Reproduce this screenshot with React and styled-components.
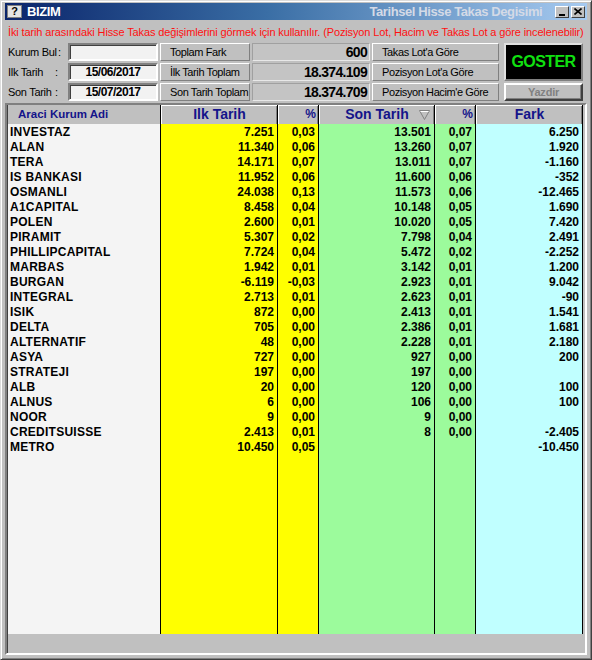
import React from 'react';
import styled, { createGlobalStyle } from 'styled-components';

const GlobalStyle = createGlobalStyle`
  html, body {
    margin: 0;
    padding: 0;
    background: #c0c0c0;
  }
  body {
    font-family: "Liberation Sans", Arial, sans-serif;
  }
`;

const face = '#c0c0c0';

const Window = styled.div`
  width: 592px;
  height: 660px;
  box-sizing: border-box;
  background: ${face};
  border: 1px solid;
  border-color: #dcdcdc #404040 #404040 #dcdcdc;
  box-shadow: inset 1px 1px #ffffff, inset -1px -1px #808080;
  padding: 2px 4px 4px 4px;
  display: flex;
  flex-direction: column;
`;

const TitleBar = styled.div`
  height: 17px;
  display: flex;
  align-items: center;
  padding: 0 2px 0 2px;
  background: linear-gradient(90deg, #0a246a 0%, #3a6ea5 45%, #a6caf0 100%);
  color: #ffffff;
  font-weight: bold;
  font-size: 13px;
  letter-spacing: -0.4px;
  overflow: hidden;
`;

const AppIcon = styled.div`
  width: 13px;
  height: 11px;
  margin-right: 5px;
  background: #e4e4e4;
  border: 1px solid #808080;
  color: #000;
  font-size: 11px;
  line-height: 11px;
  text-align: center;
  letter-spacing: 0;
`;

const TitleText = styled.span`
  white-space: nowrap;
`;

const SubTitle = styled.span`
  flex: 1;
  min-width: 0;
  white-space: nowrap;
  overflow: hidden;
  color: #d4dae6;
  padding-left: 309px;
`;

const CaptionButton = styled.div`
  width: 14px;
  height: 12px;
  box-sizing: border-box;
  margin-left: ${(p) => (p.$gap ? '2px' : '0')};
  background: ${face};
  border: 1px solid;
  border-color: #ffffff #404040 #404040 #ffffff;
  display: flex;
  align-items: center;
  justify-content: center;
  flex-shrink: 0;
`;

const Notice = styled.div`
  margin-top: 5px;
  height: 14px;
  line-height: 14px;
  padding-left: 3px;
  color: #ff1010;
  font-size: 11px;
  letter-spacing: -0.13px;
  white-space: nowrap;
  overflow: hidden;
`;

const Controls = styled.div`
  margin-top: 4px;
  display: grid;
  grid-template-columns: 61px 90px 90px 118px 127px 82px;
  grid-template-rows: 18px 18px 18px;
  column-gap: 2px;
  row-gap: 2px;
`;

const Label = styled.div`
  display: flex;
  align-items: center;
  padding-left: 3px;
  font-size: 11px;
  letter-spacing: -0.3px;
  color: #000;
`;

const Caption = styled.span`
  display: inline-block;
  min-width: ${(p) => p.$w || 47}px;
`;

const DateInput = styled.div`
  box-sizing: border-box;
  background: #f2f2f2;
  border: 2px solid;
  border-color: #808080 #ffffff #ffffff #808080;
  box-shadow: inset 1px 1px #404040;
  font-size: 12px;
  font-weight: bold;
  letter-spacing: -0.5px;
  line-height: 14px;
  text-align: center;
  color: #000;
`;

const FaceButton = styled.div`
  box-sizing: border-box;
  background: ${face};
  border: 1px solid;
  border-color: #ffffff #808080 #808080 #ffffff;
  padding-left: 9px;
  font-size: 11px;
  letter-spacing: -0.4px;
  line-height: 16px;
  color: #000;
  white-space: nowrap;
  overflow: hidden;
`;

const ValueBox = styled.div`
  box-sizing: border-box;
  background: #c4c4c4;
  border: 1px solid;
  border-color: #a0a0a0 #e8e8e8 #e8e8e8 #a0a0a0;
  padding-right: 2px;
  text-align: right;
  font-size: 14px;
  font-weight: bold;
  letter-spacing: -0.7px;
  line-height: 16px;
  color: #000;
`;

const GoButton = styled.div`
  grid-column: 6;
  grid-row: 1 / span 2;
  margin-left: 3px;
  box-sizing: border-box;
  background: #000;
  border: 2px solid;
  border-color: #e0e0e0 #808080 #808080 #e0e0e0;
  display: flex;
  align-items: center;
  justify-content: center;
  color: #10e010;
  font-size: 16px;
  font-weight: bold;
  letter-spacing: -0.6px;
`;

const PrintButton = styled.div`
  grid-column: 6;
  grid-row: 3;
  margin-left: 3px;
  box-sizing: border-box;
  background: ${face};
  border: 2px solid;
  border-color: #ffffff #404040 #404040 #ffffff;
  box-shadow: inset -1px -1px #808080;
  text-align: center;
  line-height: 14px;
  color: #808080;
  font-size: 11px;
  font-weight: bold;
  letter-spacing: -0.2px;
`;

const Grid = styled.div`
  margin-top: 2px;
  flex: 1;
  box-sizing: border-box;
  background: ${face};
  border: 2px solid;
  border-color: #808080 #ffffff #ffffff #808080;
  box-shadow: inset 1px 0 #404040;
  padding-left: 1px;
`;

const Columns = styled.div`
  display: flex;
  height: 529px;
`;

const Column = styled.div`
  width: ${(p) => p.$w}px;
  flex-shrink: 0;
  box-sizing: border-box;
  background: ${(p) => p.$bg};
  border-right: 1px solid #000;
  display: flex;
  flex-direction: column;
`;

const HeaderCell = styled.div`
  position: relative;
  height: 19px;
  margin-bottom: 1px;
  box-sizing: border-box;
  background: ${face};
  border-top: 1px solid ${(p) => (p.$flat ? face : '#ffffff')};
  border-left: 1px solid ${(p) => (p.$flat ? face : '#ffffff')};
  box-shadow: ${(p) => (p.$flat ? 'none' : 'inset -1px 0 #808080')};
  color: #14148a;
  font-weight: bold;
  font-size: ${(p) => p.$size || 14}px;
  line-height: 17px;
  text-align: ${(p) => p.$align || 'center'};
  padding: ${(p) => p.$pad || '0'};
  white-space: nowrap;
`;

const SortMark = styled.svg`
  position: absolute;
  right: 4px;
  top: 4px;
`;

const Cell = styled.div`
  height: 15px;
  line-height: 15px;
  font-size: 12px;
  font-weight: bold;
  color: #000;
  white-space: nowrap;
  overflow: hidden;
  text-align: ${(p) => p.$align || 'right'};
  padding: ${(p) => (p.$align === 'left' ? '0 0 0 2px' : '0 3px 0 0')};
  letter-spacing: ${(p) => (p.$align === 'left' ? '0.25px' : '0')};
`;

const rows = [
  ['INVESTAZ', '7.251', '0,03', '13.501', '0,07', '6.250'],
  ['ALAN', '11.340', '0,06', '13.260', '0,07', '1.920'],
  ['TERA', '14.171', '0,07', '13.011', '0,07', '-1.160'],
  ['IS BANKASI', '11.952', '0,06', '11.600', '0,06', '-352'],
  ['OSMANLI', '24.038', '0,13', '11.573', '0,06', '-12.465'],
  ['A1CAPITAL', '8.458', '0,04', '10.148', '0,05', '1.690'],
  ['POLEN', '2.600', '0,01', '10.020', '0,05', '7.420'],
  ['PIRAMIT', '5.307', '0,02', '7.798', '0,04', '2.491'],
  ['PHILLIPCAPITAL', '7.724', '0,04', '5.472', '0,02', '-2.252'],
  ['MARBAS', '1.942', '0,01', '3.142', '0,01', '1.200'],
  ['BURGAN', '-6.119', '-0,03', '2.923', '0,01', '9.042'],
  ['INTEGRAL', '2.713', '0,01', '2.623', '0,01', '-90'],
  ['ISIK', '872', '0,00', '2.413', '0,01', '1.541'],
  ['DELTA', '705', '0,00', '2.386', '0,01', '1.681'],
  ['ALTERNATIF', '48', '0,00', '2.228', '0,01', '2.180'],
  ['ASYA', '727', '0,00', '927', '0,00', '200'],
  ['STRATEJI', '197', '0,00', '197', '0,00', ''],
  ['ALB', '20', '0,00', '120', '0,00', '100'],
  ['ALNUS', '6', '0,00', '106', '0,00', '100'],
  ['NOOR', '9', '0,00', '9', '0,00', ''],
  ['CREDITSUISSE', '2.413', '0,01', '8', '0,00', '-2.405'],
  ['METRO', '10.450', '0,05', '', '', '-10.450'],
];

const columns = [
  { title: 'Araci Kurum Adi', w: 153, bg: '#f4f4f4', align: 'left', flat: true, size: 11.5, pad: '0 0 0 9px', hAlign: 'left' },
  { title: 'Ilk Tarih', w: 117, bg: '#ffff00' },
  { title: '%', w: 41, bg: '#ffff00', size: 12, hAlign: 'right', pad: '0 2px 0 0' },
  { title: 'Son Tarih', w: 116, bg: '#9cfb9c', sort: true },
  { title: '%', w: 41, bg: '#9cfb9c', size: 12, hAlign: 'right', pad: '0 2px 0 0' },
  { title: 'Fark', w: 107, bg: '#c0ffff' },
];

const MinimizeGlyph = () => (
  <svg width="8" height="8" viewBox="0 0 8 8">
    <rect x="1" y="6" width="6" height="2" fill="#000" />
  </svg>
);

const CloseGlyph = () => (
  <svg width="8" height="7" viewBox="0 0 8 7">
    <path d="M0.5 0.5 L7.5 6.5 M7.5 0.5 L0.5 6.5" stroke="#000" strokeWidth="1.6" />
  </svg>
);

const App = () => {
  return (
    <>
      <GlobalStyle />
      <Window>
        <TitleBar>
          <AppIcon>?</AppIcon>
          <TitleText>BIZIM</TitleText>
          <SubTitle>Tarihsel Hisse Takas Degisimi</SubTitle>
          <CaptionButton>
            <MinimizeGlyph />
          </CaptionButton>
          <CaptionButton $gap>
            <CloseGlyph />
          </CaptionButton>
        </TitleBar>

        <Notice>
          İki tarih arasındaki Hisse Takas değişimlerini görmek için kullanılır. (Pozisyon Lot, Hacim ve Takas Lot a göre incelenebilir)
        </Notice>

        <Controls>
          <Label>
            <Caption $w={50}>Kurum Bul</Caption>:
          </Label>
          <DateInput />
          <FaceButton>Toplam Fark</FaceButton>
          <ValueBox>600</ValueBox>
          <FaceButton>Takas Lot'a Göre</FaceButton>
          <GoButton>GOSTER</GoButton>

          <Label>
            <Caption>Ilk Tarih</Caption>:
          </Label>
          <DateInput>15/06/2017</DateInput>
          <FaceButton>İlk Tarih Toplam</FaceButton>
          <ValueBox>18.374.109</ValueBox>
          <FaceButton>Pozisyon Lot'a Göre</FaceButton>

          <Label>
            <Caption>Son Tarih</Caption>:
          </Label>
          <DateInput>15/07/2017</DateInput>
          <FaceButton>Son Tarih Toplam</FaceButton>
          <ValueBox>18.374.709</ValueBox>
          <FaceButton>Pozisyon Hacim'e Göre</FaceButton>
          <PrintButton>Yazdir</PrintButton>
        </Controls>

        <Grid>
          <Columns>
            {columns.map((col, ci) => (
              <Column key={ci} $w={col.w} $bg={col.bg}>
                <HeaderCell
                  $flat={col.flat}
                  $size={col.size}
                  $align={col.hAlign}
                  $pad={col.pad}
                >
                  {col.title}
                  {col.sort && (
                    <SortMark width="11" height="10" viewBox="0 0 11 10">
                      <path d="M0.5 0.5 H10.5 L5.5 9.5 Z" fill="none" stroke="#808080" strokeWidth="1" />
                      <path d="M1.5 1.5 H9.5" stroke="#ffffff" strokeWidth="1" />
                    </SortMark>
                  )}
                </HeaderCell>
                {rows.map((r, ri) => (
                  <Cell key={ri} $align={col.align}>
                    {r[ci]}
                  </Cell>
                ))}
              </Column>
            ))}
          </Columns>
        </Grid>
      </Window>
    </>
  );
};

export default App;
